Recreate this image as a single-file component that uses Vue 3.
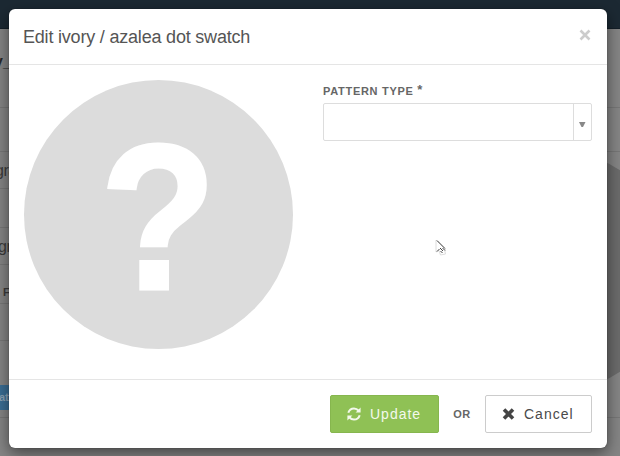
<script setup>
const rows = [
  { height: 79, text: 'y_', shift: -6, kind: 'heading' },
  { height: 44, text: '', shift: 0, kind: 'plain' },
  { height: 37, text: 'gra', shift: -5, kind: 'plain' },
  { height: 39, text: '', shift: 0, kind: 'plain' },
  { height: 37, text: 'gr', shift: -2, kind: 'plain' },
  { height: 39, text: 'F', shift: 3, kind: 'label' },
  { height: 37, text: '', shift: 0, kind: 'plain' },
  { height: 77, text: 'att', shift: -1, kind: 'button' },
  { height: 39, text: '', shift: 0, kind: 'plain' },
]
</script>

<template>
  <div class="screen">
    <div class="page">
      <div class="navbar"></div>
      <div class="rows">
        <div v-for="(row, i) in rows" :key="i" class="row" :class="row.kind" :style="{ height: row.height + 'px' }">
          <span v-if="row.text" :style="{ textIndent: row.shift + 'px' }">{{ row.text }}</span>
        </div>
      </div>
      <div class="swatch"></div>
    </div>

    <section class="modal" role="dialog">
      <header class="modal-header">
        <h3 class="title">Edit ivory / azalea dot swatch</h3>
        <button class="close" type="button" aria-label="Close">
          <svg width="12" height="12" viewBox="0 0 12 12"><path d="M1.500 1.500L10.500 10.500M10.500 1.500L1.500 10.500" /></svg>
        </button>
      </header>

      <div class="modal-body">
        <div class="placeholder"><span class="mark">?</span></div>
        <div class="field">
          <label class="label">PATTERN TYPE <span class="star">*</span></label>
          <div class="select">
            <div class="value"></div>
            <div class="arrow">
              <svg width="7" height="5" viewBox="0 0 7 5"><path d="M0 0H6.500L4 5H2.500Z" /></svg>
            </div>
          </div>
        </div>
      </div>

      <footer class="modal-footer">
        <button class="btn update" type="button">
          <svg class="refresh" width="14" height="14" viewBox="0 0 14 14">
            <path class="arc" d="M1.300 5.800C2.200 2.800 4.300 1.400 7 1.400C9 1.400 10.400 2.200 11.800 3.700M12.700 8.200C11.800 11.200 9.700 12.600 7 12.600C5 12.600 3.600 11.800 2.200 10.300" />
            <path class="head" d="M13.600 0.600V5.600H8.600ZM0.400 13.400V8.400H5.400Z" />
          </svg>
          <span>Update</span>
        </button>
        <span class="or">OR</span>
        <button class="btn cancel" type="button">
          <svg class="times" width="13" height="12" viewBox="0 0 13 12"><path d="M2 1.500L11 10.500M11 1.500L2 10.500" /></svg>
          <span>Cancel</span>
        </button>
      </footer>
    </section>

    <svg class="cursor" width="12" height="18" viewBox="0 0 12 18">
      <path class="halo" d="M1 1V13L4 11.500L5.500 16L10.500 15L9.500 10.500H10.500Z" />
      <path class="edge" d="M2 1.500L10 9.500M2 12.500L4.500 10M5 9L8 12M7.500 9L10 11.500M5.500 12L7.500 14" />
    </svg>
  </div>
</template>

<style>
body {
  margin: 0;
  overflow: hidden;
}
</style>

<style scoped>
.screen {
  position: relative;
  width: 620px;
  height: 456px;
  overflow: hidden;
  font-family: "Liberation Sans", Arial, sans-serif;
  color: #444;
}

.page {
  height: 456px;
  background: #858585;
}

.navbar {
  box-sizing: border-box;
  height: 29px;
  background: #1c2933;
  border-bottom: 1px solid #141f28;
}

.row {
  box-sizing: border-box;
  display: flex;
  align-items: center;
  width: 620px;
  border-bottom: 1px solid #777;
  color: #3b3b3b;
  font-size: 16px;
  line-height: 18px;
}

.row span {
  white-space: nowrap;
}

.row.plain {
  padding-top: 1px;
  letter-spacing: -0.5px;
}

.row.heading {
  align-items: flex-start;
  padding-top: 24px;
  font-weight: bold;
  color: #292929;
}

.row.label {
  padding-top: 15px;
  font-size: 11px;
  font-weight: bold;
}

.row.button {
  padding-top: 36px;
}

.row.button span {
  width: 12px;
  height: 25px;
  line-height: 25px;
  background: #3a6d94;
  color: #8ba3b5;
  font-size: 11px;
  font-weight: bold;
}

.swatch {
  position: absolute;
  left: 432px;
  top: 150px;
  width: 242px;
  height: 242px;
  border-radius: 50%;
  background: #6b6b6b;
}

.modal {
  position: absolute;
  left: 9px;
  top: 9px;
  box-sizing: border-box;
  display: flex;
  flex-direction: column;
  width: 598px;
  height: 439px;
  background: #fff;
  border-radius: 6px;
  box-shadow: 0 5px 15px rgba(0, 0, 0, 0.5), 0 0 1px rgba(0, 0, 0, 0.5);
}

.modal-header {
  box-sizing: border-box;
  display: flex;
  justify-content: space-between;
  height: 56px;
  padding: 16px 16px 0 14px;
  border-bottom: 1px solid #e5e5e5;
}

.title {
  margin: 0;
  font-size: 18px;
  font-weight: normal;
  line-height: 24px;
  letter-spacing: -0.2px;
  color: #555;
}

.close {
  display: flex;
  height: 12px;
  margin-top: 4px;
  padding: 0;
  border: 0;
  background: none;
}

.close svg {
  fill: none;
  stroke: #ccc;
  stroke-width: 2.6;
}

.modal-body {
  box-sizing: border-box;
  display: flex;
  gap: 30px;
  height: 314px;
  padding: 15px;
}

.placeholder {
  display: flex;
  justify-content: center;
  width: 269px;
  height: 269px;
  border-radius: 50%;
  background: #dcdcdc;
  color: #fff;
}

.mark {
  padding-top: 3px;
  font-size: 207px;
  font-weight: bold;
  line-height: 269px;
  transform: scaleX(0.92);
  -webkit-text-stroke: 3px #fff;
}

.field {
  width: 269px;
}

.modal-body .label {
  display: block;
  height: 23px;
  font-size: 11px;
  font-weight: bold;
  line-height: 22px;
  letter-spacing: 0.7px;
  color: #666;
}

.star {
  display: inline-block;
  font-size: 13px;
  line-height: 10px;
  transform: translateY(-1px);
}

.select {
  box-sizing: border-box;
  display: flex;
  height: 38px;
  border: 1px solid #ddd;
  border-radius: 2px;
}

.value {
  flex: 1;
}

.arrow {
  display: flex;
  align-items: center;
  justify-content: center;
  width: 17px;
  padding-top: 4px;
  border-left: 1px solid #ddd;
  fill: #888;
}

.modal-footer {
  box-sizing: border-box;
  display: flex;
  justify-content: flex-end;
  height: 69px;
  padding: 15px;
  border-top: 1px solid #e5e5e5;
}

.btn {
  box-sizing: border-box;
  display: flex;
  align-items: center;
  height: 38px;
  padding: 0 0 0 16px;
  border: 1px solid #ccc;
  border-radius: 2px;
  background: #fff;
  color: #4a4a4a;
  font-family: inherit;
  font-size: 14px;
  letter-spacing: 1px;
  white-space: nowrap;
}

.update {
  width: 109px;
  background: #8fc155;
  border-color: #86b64e;
  color: #f3f9ec;
}

.refresh {
  margin-right: 9px;
}

.arc {
  fill: none;
  stroke: #f3f9ec;
  stroke-width: 2;
}

.head {
  fill: #f3f9ec;
}

.or {
  width: 46px;
  font-size: 11px;
  font-weight: bold;
  line-height: 38px;
  letter-spacing: 0.6px;
  text-align: center;
  color: #666;
}

.cancel {
  width: 107px;
}

.times {
  margin-right: 9px;
  fill: none;
  stroke: #444;
  stroke-width: 3.6;
}

.cursor {
  position: absolute;
  left: 435px;
  top: 239px;
}

.halo {
  fill: #fff;
  stroke: #ddd;
  stroke-width: 1;
}

.edge {
  fill: none;
  stroke: #444;
  stroke-width: 1;
}
</style>
